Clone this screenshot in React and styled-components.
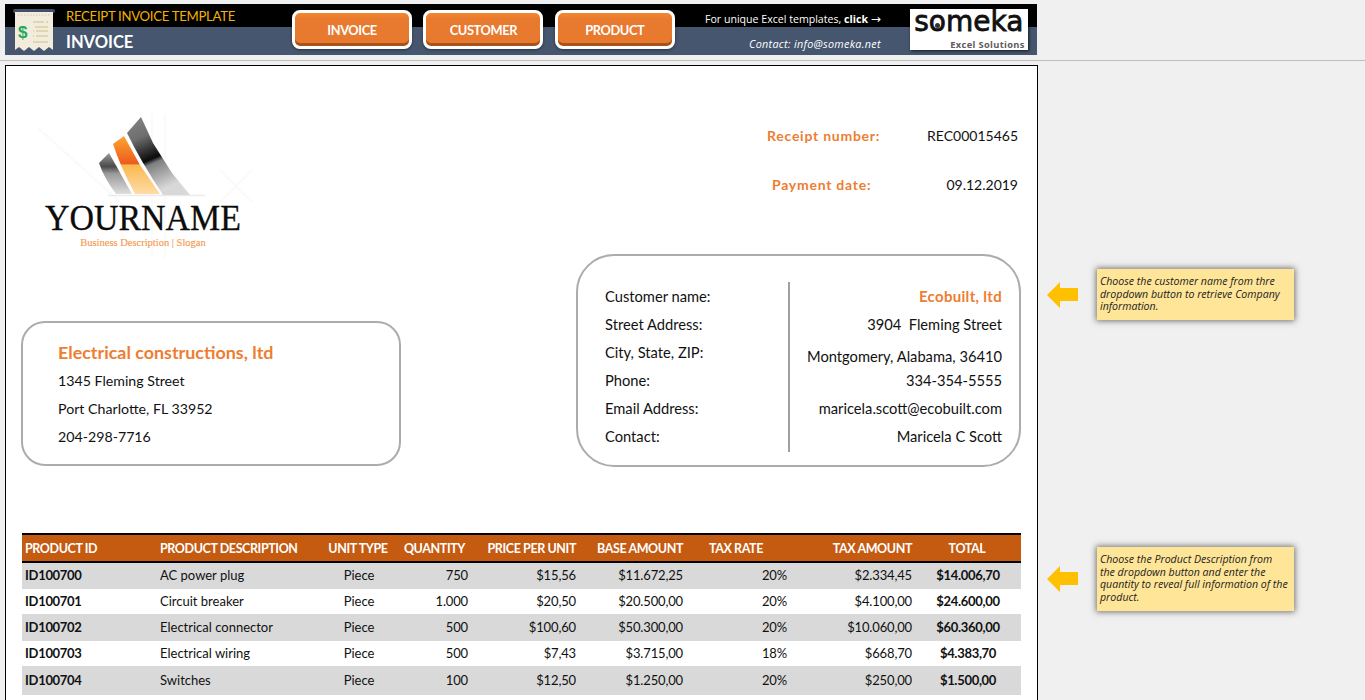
import styled, { createGlobalStyle } from 'styled-components'

const Global = createGlobalStyle`
  html, body {
    margin: 0;
    padding: 0;
    background: #f0f0f0;
    overflow: hidden;
  }
  body {
    font-family: "Lato", "Liberation Sans", sans-serif;
    color: #111;
  }
`

const customerRows = [
  { label: 'Customer name:', value: 'Ecobuilt, ltd', accent: true },
  { label: 'Street Address:', value: '3904  Fleming Street' },
  { label: 'City, State, ZIP:', value: 'Montgomery, Alabama, 36410', low: true },
  { label: 'Phone:', value: '334-354-5555' },
  { label: 'Email Address:', value: 'maricela.scott@ecobuilt.com' },
  { label: 'Contact:', value: 'Maricela C Scott' },
]

const columns = [
  { title: 'PRODUCT ID', width: 135, head: 'left', cell: 'left' },
  { title: 'PRODUCT DESCRIPTION', width: 168, head: 'left', cell: 'left' },
  { title: 'UNIT TYPE', width: 66, head: 'center', cell: 'center' },
  { title: 'QUANTITY', width: 78, head: 'right', headInset: 4, cell: 'right' },
  { title: 'PRICE PER UNIT', width: 108, head: 'right', cell: 'right' },
  { title: 'BASE AMOUNT', width: 107, head: 'right', cell: 'right' },
  { title: 'TAX RATE', width: 104, head: 'center', cell: 'right' },
  { title: 'TAX AMOUNT', width: 125, head: 'right', cell: 'right' },
  { title: 'TOTAL', width: 108, head: 'center', cell: 'center' },
]

const products = [
  { height: 26, cells: ['ID100700', 'AC power plug', 'Piece', '750', '$15,56', '$11.672,25', '20%', '$2.334,45', '$14.006,70'] },
  { height: 25, cells: ['ID100701', 'Circuit breaker', 'Piece', '1.000', '$20,50', '$20.500,00', '20%', '$4.100,00', '$24.600,00'] },
  { height: 27, cells: ['ID100702', 'Electrical connector', 'Piece', '500', '$100,60', '$50.300,00', '20%', '$10.060,00', '$60.360,00'] },
  { height: 25, cells: ['ID100703', 'Electrical wiring', 'Piece', '500', '$7,43', '$3.715,00', '18%', '$668,70', '$4.383,70'] },
  { height: 29, cells: ['ID100704', 'Switches', 'Piece', '100', '$12,50', '$1.250,00', '20%', '$250,00', '$1.500,00'] },
]

function ReceiptIcon() {
  return (
    <svg width="42" height="44" viewBox="0 0 42 44">
      <rect x="0" y="0" width="42" height="4" rx="2" fill="#3f5068" />
      <path d="M2 3H40V41L36 38L31 42L26 38L21 42L16 38L11 42L6 38L2 41Z" fill="#f1ecdc" />
      <path d="M5 6H38" stroke="#c9c4b4" strokeWidth="1" strokeDasharray="1.5 1.5" />
      <path d="M20 13H31M33 13H35M22 18H35M20 22H21M23 22H35M20 27H21M23 27H35M20 33H35" stroke="#dccda5" strokeWidth="1.4" />
      <text x="5" y="29" fontFamily="Liberation Sans, sans-serif" fontWeight="700" fontSize="17" fill="#24a85a">$</text>
    </svg>
  )
}

function CompanyLogo() {
  return (
    <svg width="250" height="170" viewBox="0 0 250 170">
      <defs>
        <linearGradient id="darkBand" x1="0" y1="0" x2="0" y2="1">
          <stop offset="0" stopColor="#9a9a9a" />
          <stop offset="0.33" stopColor="#4a4a4a" />
          <stop offset="0.5" stopColor="#999" />
          <stop offset="1" stopColor="#dedede" />
        </linearGradient>
        <linearGradient id="rightBand" x1="0" y1="0" x2="0.35" y2="1">
          <stop offset="0" stopColor="#858585" />
          <stop offset="0.3" stopColor="#6e6e6e" />
          <stop offset="0.6" stopColor="#0a0a0a" />
          <stop offset="0.66" stopColor="#7e7e7e" />
          <stop offset="1" stopColor="#d8d8d8" />
        </linearGradient>
        <linearGradient id="midBand" x1="0" y1="0" x2="0" y2="1">
          <stop offset="0" stopColor="#fba62e" />
          <stop offset="0.48" stopColor="#ee5a1e" />
          <stop offset="0.5" stopColor="#fbb84f" />
          <stop offset="1" stopColor="#fddca6" />
        </linearGradient>
      </defs>
      <path d="M18 28L120 120M200 70L232 102M232 70L200 102M145 14V158M132 14V158" stroke="#fafafa" strokeWidth="2" fill="none" />
      <path d="M88 95.5H185" stroke="#ececec" strokeWidth="1.5" />
      <path d="M79 63L89 53L112 94H96Q84 78 79 63Z" fill="url(#darkBand)" />
      <path d="M93 44L104 36L120 65L140 94H115Q100 66 93 44Z" fill="url(#midBand)" />
      <path d="M107 33L121 17L133 43L152 73L170 95H143Q120 60 107 33Z" fill="url(#rightBand)" />
      <text x="123" y="130" textAnchor="middle" fontFamily="Liberation Serif, serif" fontSize="35" fill="#0c0c0c" stroke="#0c0c0c" strokeWidth="0.3" textLength="196" lengthAdjust="spacingAndGlyphs">YOURNAME</text>
      <text x="123" y="146" textAnchor="middle" fontFamily="Liberation Serif, serif" fontSize="10.5" fill="#f59a4f" stroke="#f59a4f" strokeWidth="0.15">Business Description | Slogan</text>
    </svg>
  )
}

function LeftArrow() {
  return (
    <svg width="31" height="26" viewBox="0 0 31 26">
      <path d="M0 13L13 0V6H31V19H13V26Z" fill="#ffc000" />
    </svg>
  )
}

export default function App() {
  return (
    <Page>
      <Global />
      <TopArea>
        <HeaderBar>
          <IconSlot>
            <ReceiptIcon />
          </IconSlot>
          <TitleBlock>
            <AppName>RECEIPT INVOICE TEMPLATE</AppName>
            <PageName>INVOICE</PageName>
          </TitleBlock>
          <NavGroup>
            <NavButton>INVOICE</NavButton>
            <NavButton>CUSTOMER</NavButton>
            <NavButton>PRODUCT</NavButton>
          </NavGroup>
          <Promo>
            <PromoLine>For unique Excel templates, <b>click</b> <PromoArrow>→</PromoArrow></PromoLine>
            <ContactLine>Contact: info@someka.net</ContactLine>
          </Promo>
          <BrandBox>
            <BrandName>someka</BrandName>
            <BrandSub>Excel Solutions</BrandSub>
          </BrandBox>
        </HeaderBar>
      </TopArea>

      <Workspace>
        <Sheet>
          <UpperGrid>
            <LeftColumn>
              <LogoSlot>
                <CompanyLogo />
              </LogoSlot>
              <SenderCard>
                <SenderName>Electrical constructions, ltd</SenderName>
                <SenderLine>1345 Fleming Street</SenderLine>
                <SenderLine>Port Charlotte, FL 33952</SenderLine>
                <SenderLine>204-298-7716</SenderLine>
              </SenderCard>
            </LeftColumn>
            <RightColumn>
              <MetaBlock>
                <MetaRow>
                  <MetaLabel>Receipt number:</MetaLabel>
                  <MetaValue>REC00015465</MetaValue>
                </MetaRow>
                <MetaRow $inset>
                  <MetaLabel>Payment date:</MetaLabel>
                  <MetaValue>09.12.2019</MetaValue>
                </MetaRow>
              </MetaBlock>
              <CustomerCard>
                <CustomerLabels>
                  {customerRows.map(row => (
                    <CustomerLabel key={row.label}>{row.label}</CustomerLabel>
                  ))}
                </CustomerLabels>
                <CustomerValues>
                  {customerRows.map(row => (
                    <CustomerValue key={row.label} $accent={row.accent} $low={row.low}>
                      {row.value}
                    </CustomerValue>
                  ))}
                </CustomerValues>
              </CustomerCard>
            </RightColumn>
          </UpperGrid>

          <ProductTable>
            <colgroup>
              {columns.map(col => (
                <col key={col.title} style={{ width: col.width }} />
              ))}
            </colgroup>
            <thead>
              <tr>
                {columns.map(col => (
                  <HeadCell key={col.title} $align={col.head} $inset={col.headInset}>{col.title}</HeadCell>
                ))}
              </tr>
            </thead>
            <tbody>
              {products.map((product, rowIndex) => (
                <ProductRow key={product.cells[0]} $height={product.height} $shaded={rowIndex % 2 === 0}>
                  {product.cells.map((cell, index) => (
                    <BodyCell
                      key={columns[index].title}
                      $align={columns[index].cell}
                      $bold={index === 0 || index === 8}
                      $numeric={index > 2}
                    >
                      {cell}
                    </BodyCell>
                  ))}
                </ProductRow>
              ))}
            </tbody>
          </ProductTable>
        </Sheet>

        <SideColumn>
          <SideTip>
            <LeftArrow />
            <TipNote $height={51}>
              Choose the customer name from thre<br />
              dropdown button to retrieve Company<br />
              information.
            </TipNote>
          </SideTip>
          <SideTip>
            <LeftArrow />
            <TipNote $height={64}>
              Choose the Product Description from<br />
              the dropdown button and enter the<br />
              quantity to reveal full information of the<br />
              product.
            </TipNote>
          </SideTip>
        </SideColumn>
      </Workspace>
    </Page>
  )
}

const Page = styled.div`
  width: 1365px;
  height: 700px;
  overflow: hidden;
`
const TopArea = styled.div`
  height: 56px;
  padding: 4px 0 0 5px;
  border-bottom: 1px solid #bdbdbd;
`
const HeaderBar = styled.div`
  width: 1032px;
  height: 51px;
  display: flex;
  align-items: center;
  background: linear-gradient(#000 0, #000 23px, #46566e 23px, #46566e 100%);
`
const IconSlot = styled.div`
  width: 61px;
  padding: 2px 0 0 8px;
  box-sizing: border-box;
  display: flex;
  align-items: center;
`
const TitleBlock = styled.div`
  width: 226px;
  height: 51px;
  display: flex;
  flex-direction: column;
`
const AppName = styled.div`
  height: 23px;
  line-height: 24px;
  font-size: 13.2px;
  letter-spacing: -0.3px;
  color: #f2b000;
`
const PageName = styled.div`
  height: 28px;
  line-height: 30px;
  font-size: 16.5px;
  font-weight: 700;
  color: #fff;
`
const NavGroup = styled.div`
  display: flex;
  gap: 11.4px;
`
const NavButton = styled.div`
  width: 120px;
  height: 39px;
  box-sizing: border-box;
  border: 3px solid #fff;
  border-radius: 8px;
  display: flex;
  align-items: center;
  justify-content: center;
  background: linear-gradient(#f58630, #e87a2f 18%);
  box-shadow: inset 0 -3px 0 #a9531c, 0 1px 3px rgba(0, 0, 0, 0.4);
  color: #fff;
  font-size: 12.8px;
  letter-spacing: -0.4px;
  font-weight: 700;
`
const Promo = styled.div`
  width: 206px;
  height: 51px;
  display: flex;
  flex-direction: column;
  align-items: flex-end;
`
const PromoLine = styled.div`
  height: 23px;
  line-height: 30px;
  font-family: "Open Sans", sans-serif;
  font-size: 10.6px;
  color: #fff;
  white-space: pre;
  b {
    font-weight: 700;
  }
`
const PromoArrow = styled.span`
  font-family: "DejaVu Sans", sans-serif;
  font-size: 12px;
`
const ContactLine = styled.div`
  height: 28px;
  line-height: 34px;
  font-family: "Open Sans", sans-serif;
  font-size: 10.8px;
  letter-spacing: 0.3px;
  font-style: italic;
  color: #fff;
`
const BrandBox = styled.div`
  position: relative;
  width: 118px;
  height: 41px;
  margin-left: 29px;
  box-sizing: border-box;
  background: #fff;
  box-shadow: 1px 1px 3px rgba(0, 0, 0, 0.7);
  padding: 0 3px;
  display: flex;
  flex-direction: column;
`
const BrandName = styled.div`
  height: 30px;
  font-family: "DejaVu Sans", sans-serif;
  font-size: 28px;
  line-height: 26.5px;
  -webkit-text-stroke: 0.8px #111;
  color: #111;
  text-align: center;
  &::after {
    content: '';
    position: absolute;
    left: 25px;
    top: 14px;
    width: 5px;
    height: 5px;
    border-radius: 50%;
    background: #333;
  }
`
const BrandSub = styled.div`
  height: 11px;
  font-family: "Open Sans", sans-serif;
  font-size: 9.3px;
  line-height: 12px;
  font-weight: 700;
  letter-spacing: 0.35px;
  color: #5c5c5c;
  text-align: right;
`
const Workspace = styled.div`
  display: flex;
  margin: 4px 0 0 5px;
`
const Sheet = styled.div`
  width: 1033px;
  height: 660px;
  box-sizing: border-box;
  border: 1px solid #000;
  background: #fff;
  padding-left: 16px;
  flex: none;
`
const UpperGrid = styled.div`
  height: 401px;
  display: flex;
  justify-content: space-between;
  width: 999px;
`
const LeftColumn = styled.div`
  width: 380px;
  margin-left: -1px;
  display: flex;
  flex-direction: column;
`
const LogoSlot = styled.div`
  height: 255px;
  padding-top: 34px;
  box-sizing: border-box;
  margin-left: -1px;
  line-height: 0;
`
const SenderCard = styled.div`
  width: 380px;
  height: 145px;
  box-sizing: border-box;
  border: 2px solid #acacac;
  border-radius: 24px;
  padding: 15px 0 0 35px;
`
const SenderName = styled.div`
  height: 29px;
  line-height: 28px;
  font-size: 17.9px;
  font-weight: 700;
  color: #ed7d31;
`
const SenderLine = styled.div`
  height: 28px;
  line-height: 28px;
  font-size: 14.2px;
`
const RightColumn = styled.div`
  width: 445px;
  display: flex;
  flex-direction: column;
  justify-content: flex-end;
`
const MetaBlock = styled.div`
  height: 188px;
  box-sizing: border-box;
  padding-top: 59px;
  display: flex;
  flex-direction: column;
  gap: 29px;
`
const MetaRow = styled.div`
  height: 20px;
  display: flex;
  align-items: center;
  justify-content: space-between;
  padding-left: ${props => (props.$inset ? 196 : 191)}px;
  padding-right: 3px;
`
const MetaLabel = styled.div`
  font-size: 14px;
  font-weight: 700;
  letter-spacing: 0.75px;
  color: #ed7d31;
`
const MetaValue = styled.div`
  font-size: 14px;
`
const CustomerCard = styled.div`
  height: 213px;
  box-sizing: border-box;
  border: 2px solid #acacac;
  border-radius: 38px;
  padding: 26px 17px 13px 27px;
  display: flex;
`
const CustomerLabels = styled.div`
  width: 183px;
  flex: none;
  display: flex;
  flex-direction: column;
  border-right: 2px solid #a0a0a0;
`
const CustomerLabel = styled.div`
  height: 28px;
  line-height: 28px;
  font-size: 14.7px;
`
const CustomerValues = styled.div`
  flex: 1;
  display: flex;
  flex-direction: column;
`
const CustomerValue = styled.div`
  height: 28px;
  line-height: ${props => (props.$low ? 36 : 28)}px;
  font-size: ${props => (props.$accent ? 15 : 14.7)}px;
  letter-spacing: ${props => (props.$accent ? 0.3 : 0)}px;
  text-align: right;
  white-space: pre;
  font-weight: ${props => (props.$accent ? 700 : 400)};
  color: ${props => (props.$accent ? '#ed7d31' : '#111')};
`
const ProductTable = styled.table`
  width: 999px;
  margin-top: 66px;
  table-layout: fixed;
  border-collapse: separate;
  border-spacing: 0;
  font-size: 13px;
`
const HeadCell = styled.th`
  height: 26px;
  padding: 0 ${props => props.$inset || (props.$align === 'right' ? 1 : 3)}px 0 3px;
  background: #c55a11;
  border-top: 2px solid #000;
  border-bottom: 2px solid #000;
  color: #fff;
  font-size: 12.5px;
  letter-spacing: -0.4px;
  font-weight: 700;
  white-space: nowrap;
  text-align: ${props => props.$align};
`
const ProductRow = styled.tr`
  height: ${props => props.$height}px;
  background: ${props => (props.$shaded ? '#d9d9d9' : '#fff')};
`
const BodyCell = styled.td`
  padding: 0 1px 2px 3px;
  white-space: nowrap;
  text-align: ${props => props.$align};
  font-size: 13px;
  letter-spacing: ${props => (props.$bold ? -0.3 : props.$numeric ? -0.15 : 0)}px;
  font-weight: ${props => (props.$bold ? 700 : 400)};
`
const SideColumn = styled.div`
  display: flex;
  flex-direction: column;
  padding: 204px 0 0 9px;
  gap: 227px;
`
const SideTip = styled.div`
  display: flex;
  align-items: center;
  gap: 19px;
`
const TipNote = styled.div`
  width: 197px;
  height: ${props => props.$height}px;
  box-sizing: border-box;
  padding: 6px 0 6px 3px;
  background: #ffe597;
  box-shadow: 0 0 6px 1px rgba(60, 60, 60, 0.7);
  font-family: "Open Sans", sans-serif;
  font-size: 10.6px;
  line-height: 12.5px;
  font-style: italic;
  color: #222;
`
